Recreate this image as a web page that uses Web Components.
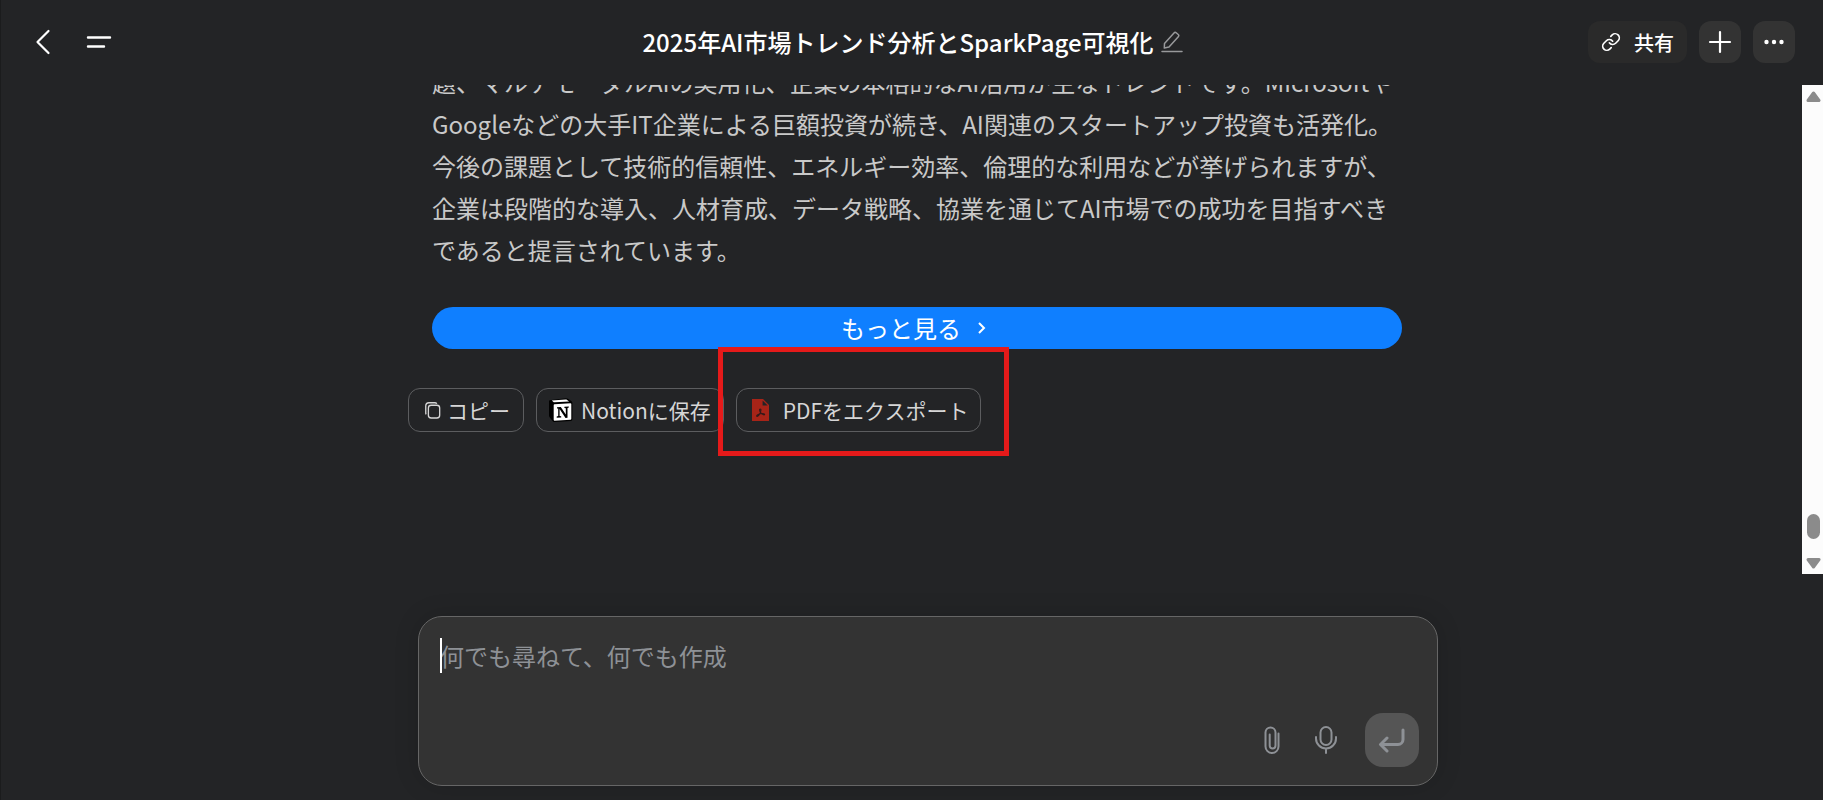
<!DOCTYPE html>
<html lang="ja">
<head>
<meta charset="utf-8">
<meta name="viewport" content="width=device-width, initial-scale=1">
<title>2025年AI市場トレンド分析とSparkPage可視化</title>
<style>
  body {
    --canvas: #232426;
    --surface: #333333;
    --line: #5c5d5f;
    --text: #c9c9c9;
    --muted: #8e9196;
    background: var(--canvas);
    color: var(--text);
    font-family: "Noto Sans CJK JP", sans-serif;
    font-size: 24px;
    margin: 0;
  }
</style>
</head>
<body>
<chat-page>
  <chat-header slot="header">2025年AI市場トレンド分析とSparkPage可視化</chat-header>
  <chat-message slot="messages">
    題、マルチモーダルAIの実用化、企業の本格的なAI活用が主なトレンドです。MicrosoftやGoogleなどの大手IT企業による巨額投資が続き、AI関連のスタートアップ投資も活発化。今後の課題として技術的信頼性、エネルギー効率、倫理的な利用などが挙げられますが、企業は段階的な導入、人材育成、データ戦略、協業を通じてAI市場での成功を目指すべきであると提言されています。
    <action-chip slot="actions" class="compact">
      <svg slot="icon" width="16" height="17" viewBox="0 0 17 18" fill="none" stroke="currentColor" stroke-width="1.4">
        <rect x="3.6" y="3.4" width="12" height="13.6" rx="3"/>
        <path d="M1.2 13.2a3 3 0 0 1-.4-1.500V4.200A3.400 3.400 0 0 1 4.200.8h6.200a3.200 3.200 0 0 1 2.300.9"/>
      </svg>
      コピー
    </action-chip>
    <action-chip slot="actions" class="notion">
      <svg slot="icon" width="24" height="24" viewBox="0 0 24 24">
        <path d="M.5 2.200 16.500.2c1-.1 1.600 0 2.400.6l3.300 2.300c.8.600 1.200 1.100 1.200 2v16c0 1.300-.5 1.900-1.900 2L5.800 24c-1 .1-1.600-.1-2.200-.9L.8 19.500c-.5-.7-.8-1.300-.8-2V3.200z" fill="#000"/>
        <path d="m2.800 2.600 13.800-1.100c.7 0 1 0 1.500.4l2 1.500-14.500.9c-.6 0-1-.1-1.400-.5z" fill="#fff"/>
        <path d="M5.500 6.200 21.400 5.200c.6 0 .9.300.9.900v14.700c0 .7-.3 1-.9 1L5.600 22.700c-.6 0-.9-.3-.9-.9V7.200c0-.6.200-.9.800-1z" fill="#fff"/>
        <path d="M8 9.200l3.800-.3 5 7.700V10.200l-1.400-.3V8.700l4.400-.3v1.200l-1.300.4v9.700l-2 .2-5.900-9v7l1.600.4v1.200l-4.500.3v-1.200l1.500-.5v-7.600L8 10.400z" fill="#000"/>
      </svg>
      Notionに保存
    </action-chip>
    <action-chip slot="actions" marked>
      <svg slot="icon" width="17" height="22" viewBox="0 0 17 22">
        <path d="M0 0h11l6 6v16H0z" fill="#a72418"/>
        <path d="M10.600 1.500v5h5z" fill="#232426"/>
        <path d="M8.200 10c1.200 0 .8 2-.1 4-.8 1.700-2 3.500-3 3.500-.9 0-.5-1.200 1-1.900 1.700-.8 4.300-1.200 5.700-.8 1.300.4.800 1.300-.3 1-1.400-.3-2.700-1.500-3.400-3C7.600 11.600 7.300 10 8.200 10z" fill="none" stroke="#33191a" stroke-width="1.100"/>
      </svg>
      PDFをエクスポート
    </action-chip>
  </chat-message>
  <chat-composer slot="composer" placeholder="何でも尋ねて、何でも作成"></chat-composer>
</chat-page>

<script>
class ChatPage extends HTMLElement {
  connectedCallback() {
    this.attachShadow({ mode: "open" });
    this.shadowRoot.innerHTML = `
      <style>
        :host {
          border-left: 1px solid #1b1c1d;
          box-sizing: border-box;
          display: flex;
          flex-direction: column;
          height: 100vh;
        }

        main {
          display: flex;
          flex: 1;
          min-height: 0;
        }

        #messages {
          box-sizing: border-box;
          display: flex;
          flex: 1;
          flex-direction: column;
          justify-content: flex-end;
          overflow: hidden;
          padding: 0 0 142px 31px;
        }

        footer {
          padding: 42px 0 14px 32px;
        }
      </style>
      <slot name="header"></slot>
      <main>
        <div id="messages"><slot name="messages"></slot></div>
        <scroll-rail></scroll-rail>
      </main>
      <footer><slot name="composer"></slot></footer>
    `;
  }
}

class ChatHeader extends HTMLElement {
  connectedCallback() {
    this.attachShadow({ mode: "open" });
    this.shadowRoot.innerHTML = `
      <style>
        :host {
          align-items: center;
          box-sizing: border-box;
          color: #fff;
          display: grid;
          grid-template-columns: 1fr auto 1fr;
          height: 85px;
          padding: 0 28px 1px;
        }

        nav, #title, #tools {
          align-items: center;
          display: flex;
        }

        nav {
          gap: 20px;
          margin-left: -4px;
        }

        #title {
          gap: 6px;
          padding-left: 2px;
        }

        #tools {
          gap: 12px;
          justify-content: flex-end;
        }

        h1 {
          font-size: 24px;
          font-weight: 500;
          line-height: 36px;
          margin: 0;
        }

        button {
          align-items: center;
          background: none;
          border: 0;
          border-radius: 12px;
          color: inherit;
          cursor: pointer;
          display: flex;
          font: inherit;
          justify-content: center;
          padding: 0;
        }

        nav button {
          height: 42px;
          width: 36px;
        }

        #tools button {
          background: #333;
          height: 42px;
          width: 42px;
        }

        #tools #share {
          background: #2a2a2a;
          font-size: 20px;
          font-weight: 500;
          gap: 13px;
          width: 99px;
        }

        #edit {
          color: #98999b;
        }

        svg {
          fill: none;
          stroke: currentColor;
          stroke-linecap: round;
          stroke-linejoin: round;
          stroke-width: 2;
        }
      </style>
      <nav>
        <button aria-label="戻る">
          <svg width="16" height="26" viewBox="0 0 16 26"><path d="M13.500 2 2.500 13l11 11" stroke-width="2.200"/></svg>
        </button>
        <button aria-label="メニュー">
          <svg width="26" height="14" viewBox="0 0 26 14"><path d="M2 2.500h22M2 11.500h16" stroke-width="2.400"/></svg>
        </button>
      </nav>
      <div id="title">
        <h1><slot></slot></h1>
        <button id="edit" aria-label="タイトルを編集">
          <svg width="24" height="22" viewBox="0 0 24 22"><path d="M2 20.500h20M4.500 12.500 14 2c.7-.8 1.500-.8 2.200-.2l2 1.700c.8.700.8 1.400.1 2.200L9 16l-4.700 1z" stroke-width="1.500"/></svg>
        </button>
      </div>
      <div id="tools">
        <button id="share">
          <svg width="20" height="20" viewBox="0 0 24 24"><path d="M10 13a5 5 0 0 0 7.540.54l3-3a5 5 0 0 0-7.070-7.070l-1.720 1.710M14 11a5 5 0 0 0-7.540-.54l-3 3a5 5 0 0 0 7.070 7.070l1.710-1.710"/></svg>
          共有
        </button>
        <button aria-label="新規作成">
          <svg width="24" height="24" viewBox="0 0 24 24"><path d="M12 2v20M2 12h20" stroke-width="2.200"/></svg>
        </button>
        <button aria-label="その他">
          <svg width="20" height="6" viewBox="0 0 20 6"><path d="M2.500 3h0M10 3h0M17.500 3h0" stroke-width="4.400"/></svg>
        </button>
      </div>
    `;
  }
}

class ChatMessage extends HTMLElement {
  connectedCallback() {
    this.attachShadow({ mode: "open" });
    this.shadowRoot.innerHTML = `
      <style>
        :host {
          align-self: center;
          display: block;
          max-width: 1018px;
          width: 100%;
        }

        article {
          padding: 0 24px;
        }

        p {
          line-height: 42px;
          margin: 0 0 36px;
        }

        #more {
          align-items: center;
          background: #0f7fff;
          border: 0;
          border-radius: 21px;
          box-sizing: border-box;
          color: #fff;
          cursor: pointer;
          display: flex;
          font: inherit;
          gap: 16px;
          height: 42px;
          justify-content: center;
          padding: 0 6px 2px 0;
          width: 100%;
        }

        #actions {
          display: flex;
          gap: 12px;
          margin-top: 39px;
        }
      </style>
      <article>
        <p><slot></slot></p>
        <button id="more">
          もっと見る
          <svg width="10" height="14" viewBox="0 0 10 14" fill="none" stroke="currentColor" stroke-width="2"><path d="m2 3 5 5-5 5"/></svg>
        </button>
      </article>
      <div id="actions"><slot name="actions"></slot></div>
    `;
  }
}

class ActionChip extends HTMLElement {
  connectedCallback() {
    this.attachShadow({ mode: "open" });
    this.shadowRoot.innerHTML = `
      <style>
        :host {
          color: #d6d6d6;
          display: block;
          position: relative;
        }

        button {
          align-items: center;
          background: none;
          border: 1px solid var(--line);
          border-radius: 12px;
          color: inherit;
          cursor: pointer;
          display: flex;
          font: inherit;
          font-size: 21px;
          gap: 14px;
          height: 44px;
          padding: 0 12px 0 15px;
          white-space: nowrap;
        }

        :host(.compact) button {
          gap: 6px;
          padding: 0 13px 0 16px;
        }

        :host(.notion) button {
          gap: 8px;
          padding: 0 12px;
        }

        /* Highlight frame around the chip */
        :host([marked])::after {
          border: 5px solid #e51a1a;
          content: "";
          inset: -41px -28px -24px -18px;
          pointer-events: none;
          position: absolute;
        }
      </style>
      <button><slot name="icon"></slot><span><slot></slot></span></button>
    `;
  }
}

class ScrollRail extends HTMLElement {
  connectedCallback() {
    this.attachShadow({ mode: "open" });
    this.shadowRoot.innerHTML = `
      <style>
        :host {
          align-items: center;
          background: #fcfcfc;
          box-sizing: border-box;
          color: #8b8b8b;
          display: flex;
          flex: none;
          flex-direction: column;
          justify-content: space-between;
          padding: 6px 0 5px 2px;
          width: 21px;
        }

        #end {
          align-items: center;
          display: flex;
          flex-direction: column;
          gap: 19px;
        }

        #thumb {
          background: currentColor;
          border-radius: 7px;
          height: 25px;
          width: 13px;
        }

        svg {
          display: block;
          fill: currentColor;
          stroke: currentColor;
          stroke-linejoin: round;
          stroke-width: 3;
        }
      </style>
      <svg width="15" height="11" viewBox="0 0 15 11"><path d="M7.500 2 13 9.500H2z"/></svg>
      <div id="end">
        <div id="thumb"></div>
        <svg width="15" height="11" viewBox="0 0 15 11"><path d="M7.500 9 13 1.500H2z"/></svg>
      </div>
    `;
  }
}

class ChatComposer extends HTMLElement {
  connectedCallback() {
    const placeholder = this.getAttribute("placeholder");
    this.attachShadow({ mode: "open" });
    this.shadowRoot.innerHTML = `
      <style>
        :host {
          display: block;
          margin: 0 auto;
          max-width: 1020px;
        }

        form {
          background: var(--surface);
          border: 1px solid #666;
          border-radius: 24px;
          box-shadow: 0 0 24px rgba(0, 0, 0, 0.15);
          box-sizing: border-box;
          padding: 21px 18px 18px 21px;
        }

        #field {
          display: block;
          position: relative;
        }

        #caret {
          background: #fff;
          height: 35px;
          left: 0;
          position: absolute;
          top: 0;
          width: 2px;
        }

        textarea {
          background: none;
          border: 0;
          box-sizing: border-box;
          color: inherit;
          display: block;
          font: inherit;
          height: 75px;
          line-height: 36px;
          outline: 0;
          overflow: hidden;
          padding: 0;
          resize: none;
          width: 100%;
        }

        textarea::placeholder {
          color: var(--muted);
          opacity: 1;
        }

        #tools {
          align-items: center;
          color: var(--muted);
          display: flex;
          gap: 12px;
          justify-content: flex-end;
        }

        button {
          align-items: center;
          background: none;
          border: 0;
          color: inherit;
          cursor: pointer;
          display: flex;
          height: 54px;
          justify-content: center;
          padding: 0;
          width: 42px;
        }

        #send {
          background: #555;
          border-radius: 18px;
          margin-left: 6px;
          width: 54px;
        }

        svg {
          fill: none;
          stroke: currentColor;
          stroke-linecap: round;
          stroke-linejoin: round;
          stroke-width: 2;
        }
      </style>
      <form>
        <label id="field">
          <textarea aria-label="${placeholder}" placeholder="${placeholder}"></textarea>
          <span id="caret"></span>
        </label>
        <div id="tools">
          <button type="button" aria-label="ファイルを添付">
            <svg width="18" height="30" viewBox="0 0 18 30"><path d="M15.500 8.500v13a6.500 6.500 0 0 1-13 0V7.500a5 5 0 0 1 10 0v13a2.900 2.900 0 0 1-5.800 0V9.500"/></svg>
          </button>
          <button type="button" aria-label="音声入力">
            <svg width="24" height="30" viewBox="0 0 24 30"><rect x="6.500" y="2" width="11" height="18" rx="5.500"/><path d="M2 12v1.500a10 10 0 0 0 20 0V12M12 23.500V28"/></svg>
          </button>
          <button type="button" id="send" aria-label="送信">
            <svg width="28" height="26" viewBox="0 0 28 26"><path d="M25 3v9.500a5 5 0 0 1-5 5H3.500M9 11l-6.500 6.500L9 24" stroke-width="3"/></svg>
          </button>
        </div>
      </form>
    `;
  }
}

customElements.define("scroll-rail", ScrollRail);
customElements.define("action-chip", ActionChip);
customElements.define("chat-message", ChatMessage);
customElements.define("chat-composer", ChatComposer);
customElements.define("chat-header", ChatHeader);
customElements.define("chat-page", ChatPage);
</script>
</body>
</html>
